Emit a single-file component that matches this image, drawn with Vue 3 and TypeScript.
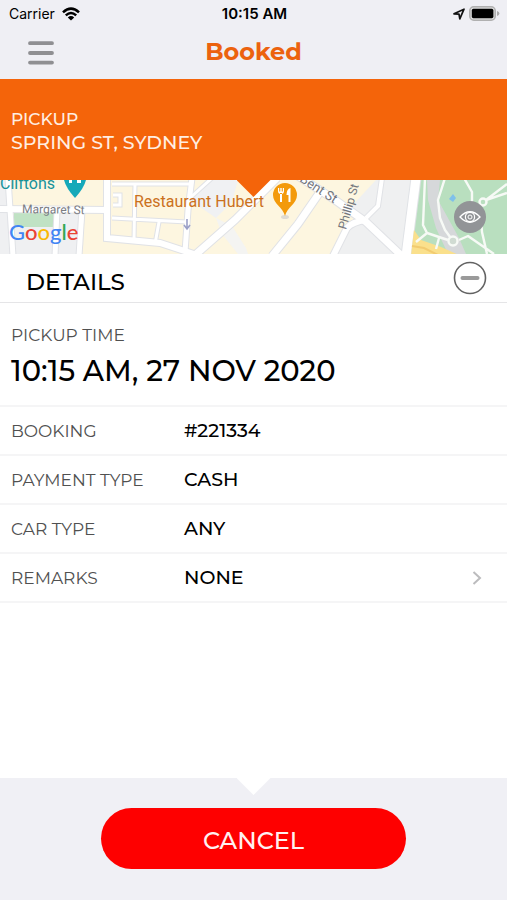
<script setup lang="ts">
import { ref } from 'vue'

interface DetailRow {
  label: string
  value: string
  link?: boolean
}

interface Road {
  path: string
  width: number
}

const expanded = ref(true)

const rows: DetailRow[] = [
  { label: 'BOOKING', value: '#221334' },
  { label: 'PAYMENT TYPE', value: 'CASH' },
  { label: 'CAR TYPE', value: 'ANY' },
  { label: 'REMARKS', value: 'NONE', link: true },
]

const roads: Road[] = [
  { path: 'M82 30L79 76', width: 5 },
  { path: 'M112 4H190M112 38L187 42M135 4L134 60M159 42L155 64M113 15H120V25H113', width: 3 },
  { path: 'M0 29L108 30', width: 6 },
  { path: 'M8 -2L13 76M57 30L55 76', width: 5 },
  { path: 'M107 -2V58L160 63L200 76', width: 6 },
  { path: 'M192 -2L188 30L185 72', width: 5 },
  { path: 'M190 18L212 -2', width: 3 },
  { path: 'M194 76L235 40L277 -2', width: 7 },
  { path: 'M272 76L298 44L320 12', width: 7 },
  { path: 'M382 -2L378 26L366 38', width: 4 },
  { path: 'M333 76L347 48Q352 42 366 40', width: 6 },
  { path: 'M298 -4L335 20L366 42L404 78', width: 7 },
  { path: 'M416 -2L406 76', width: 9 },
]
</script>

<template>
  <div class="screen">
    <div class="status">
      <div class="carrier">
        <span>Carrier</span>
        <svg width="18" height="14" viewBox="0 0 18 14" aria-hidden="true">
          <g fill="none" stroke="#000" stroke-width="2.5">
            <path d="M1 5.4Q9-2.2 17 5.4" />
            <path d="M3.8 8.4Q9 3.6 14.2 8.4" />
          </g>
          <path d="M5.8 10.4Q9 7.6 12.2 10.4L9 13.6Z" />
        </svg>
      </div>
      <span class="clock">10:15 AM</span>
      <div class="indicators">
        <svg width="12" height="12" viewBox="0 0 12 12" aria-hidden="true">
          <path d="M1 5.8L11 1.2L6.8 10.8L6 6.2Z" fill="none" stroke="#111" stroke-width="1.7" stroke-linejoin="round" />
        </svg>
        <svg width="31" height="15" viewBox="0 0 31 15" aria-hidden="true">
          <rect x="0.8" y="0.8" width="25.4" height="13.4" rx="4" fill="#ddd" stroke="#b0b0b0" stroke-width="1.6" />
          <rect x="2.8" y="2.8" width="21.6" height="9.4" rx="1.6" />
          <path d="M28 5Q30.4 5.6 30.4 7.5T28 10Z" fill="#aaa" />
        </svg>
      </div>
    </div>

    <header class="nav">
      <button class="menu" type="button" aria-label="Menu">
        <svg width="26" height="24" viewBox="0 0 26 24" aria-hidden="true">
          <path d="M2 2.2H24M2 12H24M2 21.6H24" stroke="#8f8f92" stroke-width="3.8" stroke-linecap="round" />
        </svg>
      </button>
      <h1>Booked</h1>
    </header>

    <section class="pickup">
      <div class="pickup-label">PICKUP</div>
      <div class="pickup-address">SPRING ST, SYDNEY</div>
    </section>

    <section class="map">
      <svg class="map-art" viewBox="0 0 507 74" preserveAspectRatio="xMidYMid slice" role="img" aria-label="Map of the pickup area">
        <rect width="507" height="74" fill="#fdf6e0" />
        <path d="M0 0H8L10 28H0ZM0 33H11L13 74H0ZM13 46H55V74H14ZM58 33H80L78 74H56Z" fill="#eff0f2" />
        <path d="M14 33H54V47H14Z" fill="#c0e2c4" />
        <path d="M190 20L212 0H238L232 22L216 38Z" fill="#f0f1f3" />
        <path d="M216 38L232 46L246 68L248 74H238L222 54Z" fill="#f4f4f2" />
        <path d="M333 74L350 46L366 41L350 28L376 0H507V74Z" fill="#eff0f1" />
        <path d="M336 20L350 30L362 0H320Z" fill="#fdf6e0" />
        <path d="M420 0H507V74H420L412 60Z" fill="#b9dfbf" />
        <path d="M427 0H440L438 20L459 58L466 74H448L436 48L428 20Z" fill="#d6d8da" />

        <g fill="none" stroke="#e0e2e6">
          <path v-for="road in roads" :key="road.path" :d="road.path" :stroke-width="road.width + 2" />
        </g>
        <g fill="none" stroke="#fff">
          <path v-for="road in roads" :key="road.path" :d="road.path" :stroke-width="road.width" />
        </g>
        <path d="M414 50L421 60L441 67L461 76H411Z" fill="#fae08c" />
        <path d="M412 66L424 68L440 76" fill="none" stroke="#f2cb70" stroke-width="2" />
        <g fill="none" stroke="#f7faf6" stroke-width="2.4" stroke-linejoin="round">
          <path d="M425 -2L423 45L427 53L448 60M445 -2L438 20L440 38L445 50L453 61M459 60L468 56L494 74M464 -2L472 12V22M486 20L507 13M480 26L482 52L487 74M416 62L427 53M439 58L436 69M486 20L507 4" />
          <circle cx="453" cy="61" r="4.500" fill="#d0dbd2" />
          <circle cx="483" cy="22" r="3.500" fill="#b9dfbf" />
        </g>
        <path d="M449 19L453 14L456 18L453 22Z" fill="#7fc0ea" />
        <path d="M187 39V48M184 45L187 49L190 45" fill="none" stroke="#9a9fc7" stroke-width="1.6" />

        <g class="place">
          <text x="0" y="9" font-size="16" fill="#18929a">Cliftons</text>
          <text x="134" y="27" font-size="16" fill="#cb711d">Restaurant Hubert</text>
          <text x="22" y="33" font-size="12" fill="#7b7d83" transform="rotate(1 22 33)">Margaret St</text>
          <text x="299" y="1" font-size="13" fill="#74767c" transform="rotate(33 299 1)">Bent St</text>
          <text x="346" y="50" font-size="12" fill="#74767c" transform="rotate(-74 346 50)">Phillip St</text>
        </g>
        <path d="M64 0H86Q84 8 75 18Q66 8 64 0Z" fill="#16a9b9" />
        <path d="M69 0H72V3H69ZM77 0H81V3H77Z" fill="#fff" />
        <ellipse cx="285" cy="37" rx="4" ry="2" fill="#dedbd2" />
        <path d="M285 36C283 27 273 24 273 15A12 12 0 0 1 297 15C297 24 287 27 285 36Z" fill="#f39a0b" />
        <path d="M278 8V11Q278 14 281 14Q284 14 284 11V8H282.800V11.500H281.700V8H280.300V11.500H279.200V8ZM280 13H282V22H280Z" fill="#fff" />
        <path d="M290.500 8Q286.500 9 286.500 15H288.500V22H290.500Z" fill="#fff" />
        <text class="google" x="9" y="60">
          <tspan fill="#4285f4">G</tspan><tspan fill="#ea4335">o</tspan><tspan fill="#f9b805">o</tspan><tspan fill="#4285f4">g</tspan><tspan fill="#34a853">l</tspan><tspan fill="#ea4335">e</tspan>
        </text>
      </svg>
      <button class="eye" type="button" aria-label="Toggle map view">
        <svg width="32" height="32" viewBox="0 0 32 32" fill="none" stroke="#fff" aria-hidden="true">
          <path d="M6 16Q16 5.500 26 16Q16 26.500 6 16Z" stroke-width="1.3" />
          <circle cx="16" cy="16" r="4.600" stroke-width="1.200" />
          <circle cx="16" cy="16" r="2" stroke-width="1" />
        </svg>
      </button>
    </section>

    <section class="details-head">
      <h2>DETAILS</h2>
      <button class="collapse" type="button" aria-label="Toggle details" :aria-expanded="expanded" @click="expanded = !expanded">
        <svg width="34" height="34" viewBox="0 0 34 34" fill="none" aria-hidden="true">
          <circle cx="17" cy="17" r="15.500" stroke="#636363" stroke-width="1.600" />
          <path d="M9.500 17H24.500" stroke="#9a9a9a" stroke-width="4" stroke-linecap="round" />
        </svg>
      </button>
    </section>

    <main class="details">
      <template v-if="expanded">
        <div class="time">
          <div class="label">PICKUP TIME</div>
          <div class="time-value">10:15 AM, 27 NOV 2020</div>
        </div>
        <div v-for="row in rows" :key="row.label" class="row">
          <span class="label">{{ row.label }}</span>
          <span class="value">{{ row.value }}</span>
          <svg v-if="row.link" width="10" height="16" viewBox="0 0 10 16" aria-hidden="true">
            <path d="M1.500 2L8 8L1.500 14" fill="none" stroke="#bcbcbe" stroke-width="2" />
          </svg>
        </div>
      </template>
    </main>

    <footer class="actions">
      <button class="cancel" type="button">CANCEL</button>
    </footer>
  </div>
</template>

<style>
body {
  margin: 0;
}
</style>

<style scoped>
.screen {
  display: flex;
  flex-direction: column;
  min-height: 100vh;
  background: #fff;
  color: #000;
  font-family: Montserrat, Inter, sans-serif;
}

button {
  padding: 0;
  border: 0;
  background: none;
  font-family: inherit;
  cursor: pointer;
}

svg {
  display: block;
  flex: none;
}

h1,
h2 {
  margin: 0;
}

.status {
  display: grid;
  grid-template-columns: 1fr auto 1fr;
  align-items: center;
  height: 27px;
  padding: 0 7px 0 9px;
  background: #efeff4;
  font-family: Inter, sans-serif;
  font-size: 14px;
}

.carrier,
.indicators {
  display: flex;
  align-items: center;
  gap: 7px;
}

.indicators {
  justify-content: flex-end;
  gap: 4px;
}

.clock {
  font-size: 15px;
  font-weight: 600;
}

.nav {
  display: grid;
  grid-template-columns: 1fr auto 1fr;
  align-items: center;
  height: 52px;
  padding: 0 28px;
  background: #efeff4;
}

.menu {
  justify-self: start;
}

h1 {
  padding-bottom: 3px;
  color: #ec620e;
  font-size: 24px;
  line-height: 48px;
  font-weight: 700;
}

.pickup {
  box-sizing: border-box;
  height: 101px;
  padding: 28px 11px;
  background: #f4640a;
  color: #ffeee2;
  font-weight: 500;
  line-height: 24px;
}

.pickup-label {
  font-size: 17px;
}

.pickup-address {
  font-size: 19px;
}

.map {
  position: relative;
  height: 74px;
  overflow: hidden;
}

.map-art {
  width: 100%;
  height: 100%;
}

.map::after,
.actions::before {
  content: '';
  position: absolute;
  top: 0;
  left: 50%;
  width: 34px;
  height: 17px;
  background: #f4640a;
  clip-path: polygon(0 0, 100% 0, 50% 100%);
  transform: translateX(-50%);
}

.place {
  font-family: Roboto, sans-serif;
}

.google {
  font-family: Lato, sans-serif;
  font-size: 22px;
  font-weight: 500;
}

.eye {
  position: absolute;
  top: 21px;
  right: 21px;
  border-radius: 50%;
  background: #929497;
}

.details-head {
  display: flex;
  align-items: center;
  justify-content: space-between;
  height: 48px;
  padding: 0 20px 0 26px;
  border-bottom: 1px solid #e5e5e7;
}

h2 {
  padding-top: 7px;
  font-size: 23px;
  line-height: 28px;
  font-weight: 500;
}

.details {
  flex: 1;
}

.time {
  padding: 20px 11px 14px;
}

.label {
  color: #505050;
  font-size: 17px;
  line-height: 24px;
}

.time-value {
  padding-top: 4px;
  font-size: 29px;
  line-height: 40px;
  font-weight: 500;
}

.row {
  display: grid;
  grid-template-columns: 173px 1fr auto;
  align-items: center;
  height: 47px;
  padding: 0 25px 0 11px;
  border-top: 2px solid #f5f5f6;
}

.row:last-child {
  border-bottom: 2px solid #f5f5f6;
}

.value {
  font-size: 19px;
  line-height: 26px;
  font-weight: 500;
}

.actions {
  position: relative;
  display: flex;
  justify-content: center;
  padding: 30px 0 31px;
  background: #f0f0f5;
}

.actions::before {
  background: #fff;
}

.cancel {
  box-sizing: border-box;
  width: 60%;
  height: 61px;
  padding-top: 3px;
  border-radius: 31px;
  background: #fe0000;
  color: #fff0f0;
  font-size: 24px;
  font-weight: 500;
}
</style>
